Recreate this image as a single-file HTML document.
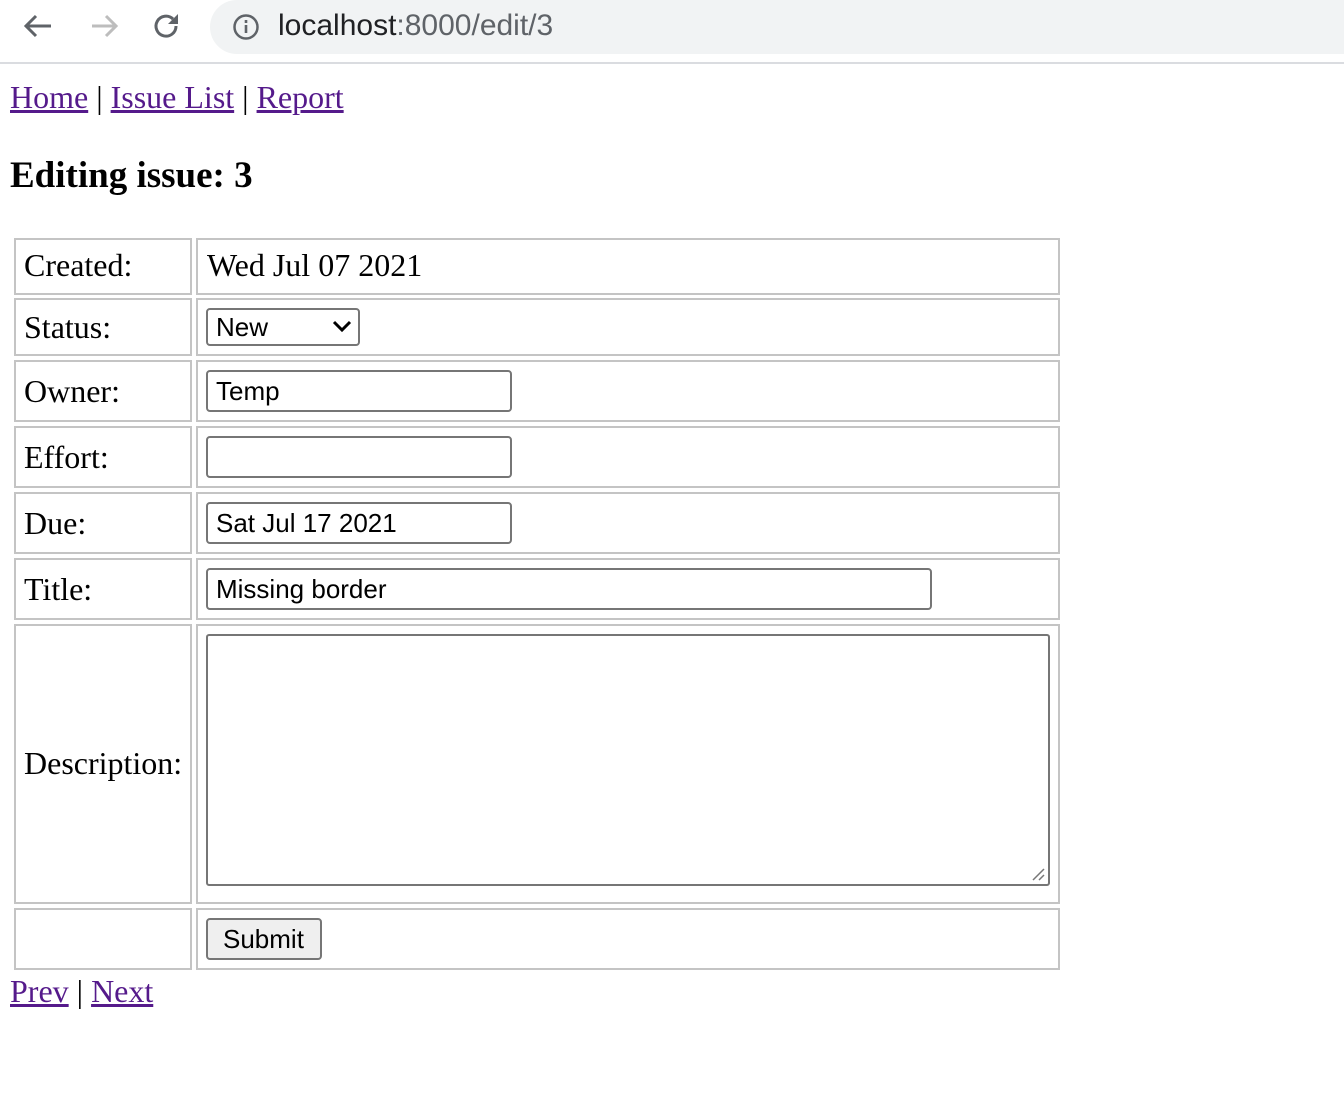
<!DOCTYPE html>
<html><head><style>
body{margin:0;width:1344px;height:1118px;background:#fff;position:relative;overflow:hidden;font-family:"Liberation Serif",serif;}
.a{position:absolute}
.c{position:absolute;border:2px solid #c4c4c4;box-sizing:border-box}
.l{position:absolute;font-size:32px;color:#000;line-height:32px}
.in{position:absolute;border:2px solid #767676;border-radius:4px;box-sizing:border-box;font-family:"Liberation Sans",sans-serif;font-size:26px;line-height:32px;padding-left:8px;background:#fff}
a{color:#551a8b}
</style></head><body>
<div class="a" style="left:0;top:0;width:1344px;height:62px;background:#fff;border-bottom:2px solid #dadce0"></div>
<svg class="a" style="left:20px;top:10px" width="170" height="34" viewBox="0 0 170 34">
<path d="M31 16H7M16 6L6 16l10 10" stroke="#5f6368" stroke-width="3" fill="none"/>
<path d="M72 16h24M86 6l10 10-10 10" stroke="#bdbdbd" stroke-width="3" fill="none"/>
<path d="M156 16a10 10 0 1 1-3-7" stroke="#5f6368" stroke-width="3" fill="none"/><path d="M158 4v10h-10z" fill="#5f6368"/>
</svg>
<div class="a" style="left:210px;top:0;width:1160px;height:54px;background:#f1f3f4;border-radius:27px"></div>
<svg class="a" style="left:232px;top:13px" width="28" height="28" viewBox="0 0 28 28"><circle cx="14" cy="14" r="11.5" stroke="#5f6368" stroke-width="2.5" fill="none"/><rect x="12.7" y="12" width="2.6" height="8" fill="#5f6368"/><rect x="12.7" y="7" width="2.6" height="3" fill="#5f6368"/></svg>
<div class="a" style="left:278px;top:9px;font-family:'Liberation Sans',sans-serif;font-size:30px;line-height:34px;color:#202124">localhost<span style="color:#5f6368">:8000/edit/3</span></div>

<div class="l" style="left:10px;top:81px"><a href="#">Home</a> | <a href="#">Issue List</a> | <a href="#">Report</a></div>
<div class="a" style="left:10px;top:156px;font-size:37px;font-weight:bold;line-height:40px">Editing issue: 3</div>

<div class="c" style="left:14px;top:238px;width:178px;height:57px"></div><div class="c" style="left:196px;top:238px;width:864px;height:57px"></div>
<div class="c" style="left:14px;top:298px;width:178px;height:58px"></div><div class="c" style="left:196px;top:298px;width:864px;height:58px"></div>
<div class="c" style="left:14px;top:360px;width:178px;height:62px"></div><div class="c" style="left:196px;top:360px;width:864px;height:62px"></div>
<div class="c" style="left:14px;top:426px;width:178px;height:62px"></div><div class="c" style="left:196px;top:426px;width:864px;height:62px"></div>
<div class="c" style="left:14px;top:492px;width:178px;height:62px"></div><div class="c" style="left:196px;top:492px;width:864px;height:62px"></div>
<div class="c" style="left:14px;top:558px;width:178px;height:62px"></div><div class="c" style="left:196px;top:558px;width:864px;height:62px"></div>
<div class="c" style="left:14px;top:624px;width:178px;height:280px"></div><div class="c" style="left:196px;top:624px;width:864px;height:280px"></div>
<div class="c" style="left:14px;top:908px;width:178px;height:62px"></div><div class="c" style="left:196px;top:908px;width:864px;height:62px"></div>

<div class="l" style="left:24px;top:249px">Created:</div><div class="l" style="left:207px;top:249px">Wed Jul 07 2021</div>
<div class="l" style="left:24px;top:311px">Status:</div>
<div class="l" style="left:24px;top:375px">Owner:</div>
<div class="l" style="left:24px;top:441px">Effort:</div>
<div class="l" style="left:24px;top:507px">Due:</div>
<div class="l" style="left:24px;top:573px">Title:</div>
<div class="l" style="left:24px;top:747px">Description:</div>

<div class="in" style="left:206px;top:308px;width:154px;height:38px;line-height:34px">New</div>
<svg class="a" style="left:332px;top:319px" width="20" height="14"><path d="M2 3l8 8 8-8" stroke="#000" stroke-width="3" fill="none"/></svg>
<div class="in" style="left:206px;top:370px;width:306px;height:42px;line-height:38px">Temp</div>
<div class="in" style="left:206px;top:436px;width:306px;height:42px"></div>
<div class="in" style="left:206px;top:502px;width:306px;height:42px;line-height:38px">Sat Jul 17 2021</div>
<div class="in" style="left:206px;top:568px;width:726px;height:42px;line-height:38px">Missing border</div>
<div class="in" style="left:206px;top:634px;width:844px;height:252px;border-radius:3px"></div>
<svg class="a" style="left:1030px;top:866px" width="16" height="16"><path d="M3 14L14 3M9 14l5-5" stroke="#777" stroke-width="1.5"/></svg>
<div class="in" style="left:206px;top:918px;width:116px;height:42px;background:#efefef;line-height:38px;padding-left:15px">Submit</div>

<div class="l" style="left:10px;top:975px"><a href="#">Prev</a> | <a href="#">Next</a></div>
</body></html>
